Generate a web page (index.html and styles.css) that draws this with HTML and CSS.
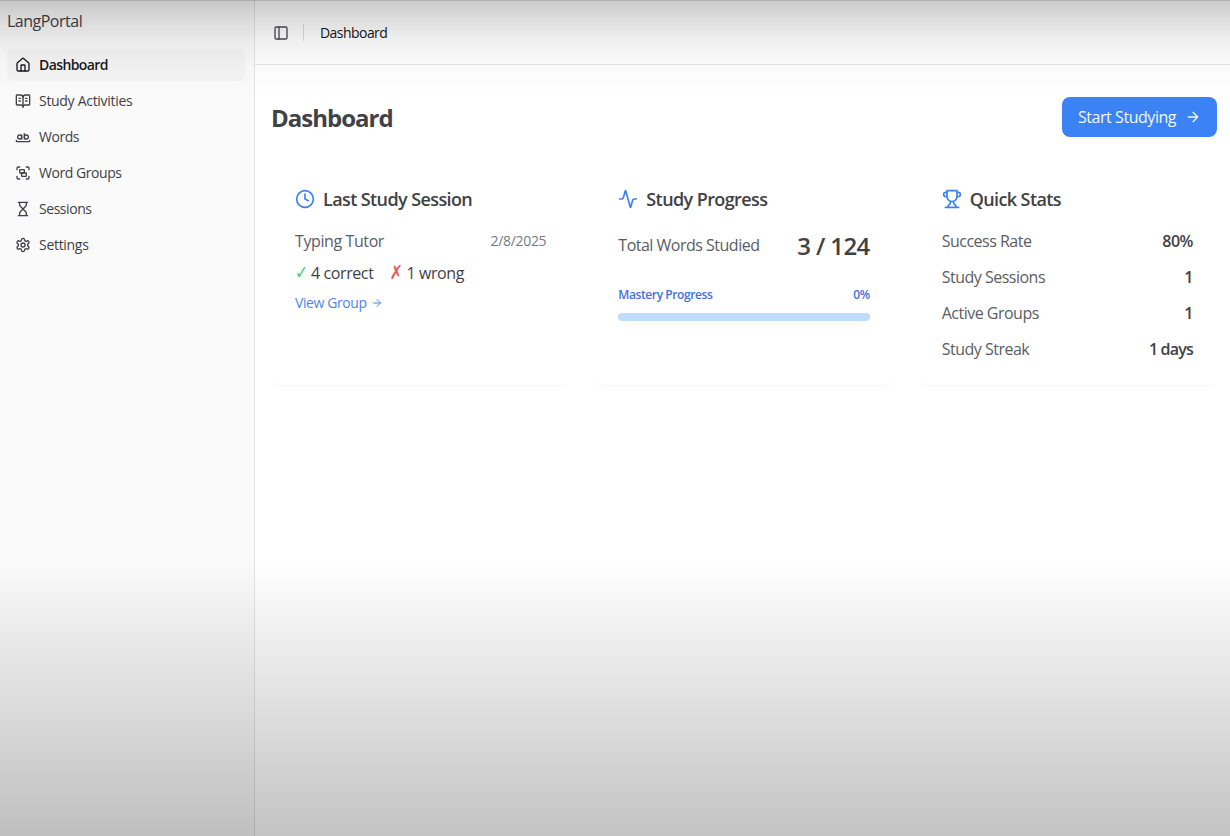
FILE: index.html
```html
<!DOCTYPE html>
<html lang="en">
<head>
<meta charset="utf-8">
<title>LangPortal</title>
<link rel="stylesheet" href="styles.css">
</head>
<body>
<div class="app">
  <aside class="sidebar">
    <div class="brand"><span>LangPortal</span></div>
    <nav class="nav">
      <a class="nav-item active"><svg class="icon" viewBox="0 0 24 24"><path d="M15 21v-8a1 1 0 0 0-1-1h-4a1 1 0 0 0-1 1v8"/><path d="M3 10a2 2 0 0 1 .709-1.528l7-5.999a2 2 0 0 1 2.582 0l7 5.999A2 2 0 0 1 21 10v9a2 2 0 0 1-2 2H5a2 2 0 0 1-2-2z"/></svg><span>Dashboard</span></a>
      <a class="nav-item wide"><svg class="icon" viewBox="0 0 24 24"><path d="M12 7v14M16 12h2M16 8h2M6 12h2M6 8h2"/><path d="M3 18a1 1 0 0 1-1-1V4a1 1 0 0 1 1-1h5a4 4 0 0 1 4 4 4 4 0 0 1 4-4h5a1 1 0 0 1 1 1v13a1 1 0 0 1-1 1h-6a3 3 0 0 0-3 3 3 3 0 0 0-3-3z"/></svg><span>Study Activities</span></a>
      <a class="nav-item"><svg class="icon" viewBox="0 0 24 24"><circle cx="7" cy="12" r="3"/><path d="M10 9v6"/><circle cx="17" cy="12" r="3"/><path d="M14 7v8"/><path d="M22 17v1c0 .5-.5 1-1 1H3c-.5 0-1-.5-1-1v-1"/></svg><span>Words</span></a>
      <a class="nav-item"><svg class="icon" viewBox="0 0 24 24"><path d="M3 7V5c0-1.100.9-2 2-2h2M17 3h2c1.100 0 2 .9 2 2v2M21 17v2c0 1.100-.9 2-2 2h-2M7 21H5c-1.100 0-2-.9-2-2v-2"/><rect width="7" height="5" x="7" y="7" rx="1"/><rect width="7" height="5" x="10" y="12" rx="1"/></svg><span>Word Groups</span></a>
      <a class="nav-item"><svg class="icon" viewBox="0 0 24 24"><path d="M5 22h14M5 2h14M17 22v-4.172a2 2 0 0 0-.586-1.414L12 12l-4.414 4.414A2 2 0 0 0 7 17.828V22M7 2v4.172a2 2 0 0 0 .586 1.414L12 12l4.414-4.414A2 2 0 0 0 17 6.172V2"/></svg><span>Sessions</span></a>
      <a class="nav-item wide"><svg class="icon" viewBox="0 0 24 24"><path d="M12.220 2h-.44a2 2 0 0 0-2 2v.18a2 2 0 0 1-1 1.730l-.43.25a2 2 0 0 1-2 0l-.15-.08a2 2 0 0 0-2.730.73l-.22.38a2 2 0 0 0 .73 2.730l.15.1a2 2 0 0 1 1 1.720v.51a2 2 0 0 1-1 1.740l-.15.09a2 2 0 0 0-.73 2.730l.22.38a2 2 0 0 0 2.730.73l.15-.08a2 2 0 0 1 2 0l.43.25a2 2 0 0 1 1 1.730V20a2 2 0 0 0 2 2h.44a2 2 0 0 0 2-2v-.18a2 2 0 0 1 1-1.730l.43-.25a2 2 0 0 1 2 0l.15.08a2 2 0 0 0 2.730-.73l.22-.39a2 2 0 0 0-.73-2.730l-.15-.08a2 2 0 0 1-1-1.740v-.5a2 2 0 0 1 1-1.740l.15-.09a2 2 0 0 0 .73-2.730l-.22-.38a2 2 0 0 0-2.730-.73l-.15.08a2 2 0 0 1-2 0l-.43-.25a2 2 0 0 1-1-1.730V4a2 2 0 0 0-2-2z"/><circle cx="12" cy="12" r="3"/></svg><span>Settings</span></a>
    </nav>
  </aside>
  <div class="page">
    <header class="topbar">
      <svg class="icon toggle" viewBox="0 0 24 24"><rect width="18" height="18" x="3" y="3" rx="2"/><path d="M9 3v18"/></svg>
      <div class="divider"></div>
      <span class="crumb">Dashboard</span>
    </header>
    <main class="main">
      <div class="heading">
        <h1 class="title">Dashboard</h1>
        <a class="button"><span>Start Studying</span><svg class="icon" viewBox="0 0 24 24"><path d="M5 12h14M12 5l7 7-7 7"/></svg></a>
      </div>
      <div class="cards">
        <section class="card">
          <h2 class="card-title"><svg class="icon" viewBox="0 0 24 24"><circle cx="12" cy="12" r="10"/><path d="M12 6v6l4 2"/></svg><span>Last Study Session</span></h2>
          <div class="row"><span class="label name">Typing Tutor</span><span class="date">2/8/2025</span></div>
          <div class="results"><span class="result"><span class="mark ok">✓</span><span>4 correct</span></span><span class="result"><span class="mark bad">✗</span><span>1 wrong</span></span></div>
          <a class="link"><span>View Group</span><svg class="icon" viewBox="0 0 24 24"><path d="M5 12h14M12 5l7 7-7 7"/></svg></a>
        </section>
        <section class="card">
          <h2 class="card-title"><svg class="icon" viewBox="0 0 24 24"><path d="M22 12h-2.480a2 2 0 0 0-1.930 1.460l-2.350 8.360a.25.25 0 0 1-.48 0L9.240 2.180a.25.25 0 0 0-.48 0l-2.350 8.360A2 2 0 0 1 4.490 12H2"/></svg><span>Study Progress</span></h2>
          <div class="row tall"><span class="label">Total Words Studied</span><span class="total">3 / 124</span></div>
          <div class="mastery"><span>Mastery Progress</span><span>0%</span></div>
          <div class="track"><div class="fill" style="width: 0%"></div></div>
        </section>
        <section class="card">
          <h2 class="card-title"><svg class="icon" viewBox="0 0 24 24"><path d="M6 9H4.500a2.500 2.500 0 0 1 0-5H6M18 9h1.500a2.500 2.500 0 0 0 0-5H18M4 22h16M10 14.660V17c0 .55-.47.98-.97 1.210C7.850 18.750 7 20.240 7 22M14 14.660V17c0 .55.47.98.97 1.210C16.150 18.750 17 20.240 17 22M18 2H6v7a6 6 0 0 0 12 0V2Z"/></svg><span>Quick Stats</span></h2>
          <div class="stats">
            <div class="row"><span class="label">Success Rate</span><span class="value">80%</span></div>
            <div class="row"><span class="label">Study Sessions</span><span class="value">1</span></div>
            <div class="row"><span class="label">Active Groups</span><span class="value">1</span></div>
            <div class="row"><span class="label">Study Streak</span><span class="value days">1 days</span></div>
          </div>
        </section>
      </div>
    </main>
  </div>
</div>
</body>
</html>
```

FILE: styles.css
```css
* { box-sizing: border-box; }
body {
  margin: 0;
  background: #fff;
  color: #414146;
  font: 16px/24px "Open Sans", "Noto Sans", sans-serif;
  letter-spacing: -0.45px;
}
h1, h2 { margin: 0; }
span { white-space: nowrap; }
.app { display: flex; height: 836px; }
/* soft shade falling over the top and bottom of the window */
.app::after {
  content: "";
  position: absolute;
  inset: 0;
  height: 836px;
  pointer-events: none;
  border-top: 1px solid rgba(0, 0, 0, .1);
  background:
    linear-gradient(rgba(0, 0, 0, .2), rgba(0, 0, 0, .125) 20px, rgba(0, 0, 0, .06) 40px, rgba(0, 0, 0, .02) 62px, transparent 95px),
    linear-gradient(transparent 560px, rgba(0, 0, 0, .235) 836px);
}
.icon {
  width: 16px;
  height: 16px;
  flex: none;
  fill: none;
  stroke: currentColor;
  stroke-width: 2;
  stroke-linecap: round;
  stroke-linejoin: round;
}
.sidebar {
  width: 255px;
  flex: none;
  padding: 8px;
  background: #fafafa;
  border-right: 1px solid #e2e3e6;
}
.brand { height: 41px; padding-top: 1px; margin-left: -1px; letter-spacing: -0.5px; }
.nav { display: flex; flex-direction: column; gap: 4px; margin-left: -1px; }
.nav-item {
  display: flex;
  align-items: center;
  gap: 8px;
  height: 32px;
  padding: 0 8px;
  border-radius: 6px;
  font-size: 14px;
  line-height: 20px;
}
.nav-item.wide { letter-spacing: -0.3px; }
.nav-item.active { margin-right: 1px; background: #f4f4f5; color: #18181b; font-weight: 600; letter-spacing: -0.6px; }
.page { flex: 1; }
.topbar {
  display: flex;
  align-items: center;
  height: 65px;
  padding: 1px 0 0 18px;
  border-bottom: 1px solid #e3e3e6;
}
.toggle { color: #4a4a4f; }
.divider { width: 1px; height: 17px; margin: 0 16px 0 14px; background: #dcdcdf; }
.crumb { padding-top: 1px; font-size: 14px; color: #151517; letter-spacing: -0.55px; }
.main { padding: 32px 13px 0 16px; }
.heading { display: flex; align-items: center; justify-content: space-between; }
.title { font-size: 24px; line-height: 32px; font-weight: 700; padding-top: 2px; letter-spacing: -1px; }
.button {
  display: flex;
  align-items: center;
  justify-content: space-between;
  width: 155px;
  height: 40px;
  padding: 0 16px;
  border-radius: 8px;
  background: #3b82f6;
  color: #f4f8ff;
}
.cards { display: grid; grid-template-columns: repeat(3, 1fr); gap: 24px; margin-top: 24px; }
.card {
  height: 224px;
  padding: 24px;
  border-radius: 8px;
  background: #fff;
  box-shadow: 0 2px 2px -2px rgba(0, 0, 0, .12);
}
.card-title {
  display: flex;
  align-items: center;
  gap: 8px;
  height: 28px;
  margin-bottom: 16px;
  font-size: 18px;
  line-height: 28px;
  font-weight: 600;
  letter-spacing: -0.6px;
}
.card-title .icon { width: 20px; height: 20px; color: #3b82f6; }
.row { display: flex; align-items: center; justify-content: space-between; height: 24px; }
.row.tall { height: 32px; }
.label { color: #5a5d64; letter-spacing: -0.5px; }
.name { letter-spacing: -0.4px; }
.date { font-size: 14px; line-height: 20px; color: #777a80; letter-spacing: -0.3px; }
.results { display: flex; gap: 16px; height: 24px; margin-top: 8px; letter-spacing: -0.4px; }
.result { display: flex; gap: 3px; }
.result + .result { gap: 4px; }
.mark { font-family: "DejaVu Sans", sans-serif; transform: scaleY(1.2); }
.ok { color: #4fca80; }
.bad { color: #e8595d; }
.link { display: flex; align-items: center; gap: 4px; height: 20px; margin-top: 8px; font-size: 14px; line-height: 20px; color: #4c86ec; letter-spacing: -0.4px; }
.link .icon { width: 12px; height: 12px; }
.total { padding-top: 2px; font-size: 24px; line-height: 32px; font-weight: 600; letter-spacing: -0.6px; }
.mastery { display: flex; justify-content: space-between; height: 20px; margin-top: 24px; font-size: 12px; line-height: 20px; font-weight: 600; color: #4470d9; letter-spacing: -0.4px; }
.track { height: 8px; margin-top: 8px; border-radius: 4px; background: #bfdbfe; }
.fill { height: 100%; border-radius: 4px; background: #3b82f6; }
.stats { display: flex; flex-direction: column; gap: 12px; }
.value { font-weight: 600; }
.days { letter-spacing: -0.8px; }
```
